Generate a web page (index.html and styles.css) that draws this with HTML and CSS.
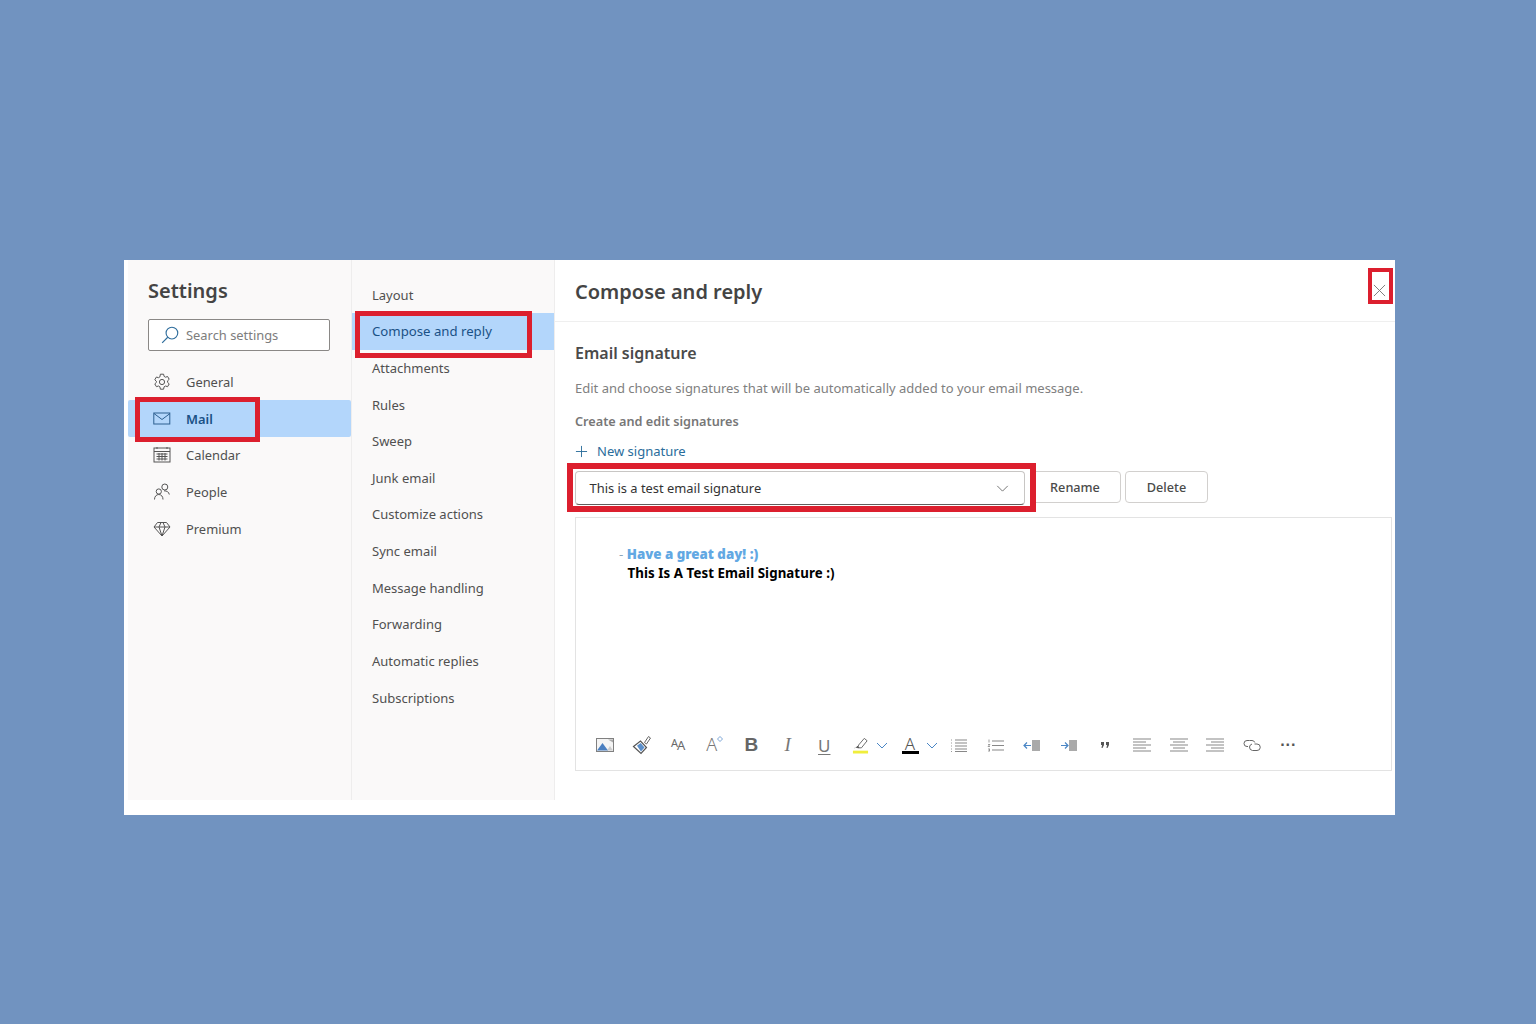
FILE: index.html
```html
<!DOCTYPE html>
<html lang="en">
<head>
<meta charset="utf-8">
<title>Settings</title>
<link rel="stylesheet" href="styles.css">
</head>
<body>
<div class="window">
  <aside class="side">
    <h1 class="side-title">Settings</h1>
    <div class="search">
      <svg class="search-icon" viewBox="0 0 16 16"><circle cx="9.7" cy="6.3" r="5.2"/><path d="M6 10 1 15"/></svg>
      <span>Search settings</span>
    </div>
    <nav class="side-nav">
      <div class="side-item">
        <svg class="ico" viewBox="0 0 18 18"><path d="M7.4 1.2h3.2l.5 2.2 1.4.8 2.1-.7 1.6 2.8-1.6 1.500v1.600l1.600 1.500-1.600 2.800-2.100-.7-1.400.8-.5 2.400H7.400l-.5-2.400-1.400-.8-2.100.7-1.600-2.800 1.600-1.500V8.300L1.800 6.800l1.600-2.800 2.100.7 1.400-.8z"/><circle cx="9" cy="9" r="2.6"/></svg>
        <span>General</span>
      </div>
      <div class="side-item active">
        <svg class="ico" viewBox="0 0 18 18"><rect x=".8" y="3" width="16" height="11"/><path d="m1 3.500 8 6 8-6"/></svg>
        <span>Mail</span>
      </div>
      <div class="side-item">
        <svg class="ico" viewBox="0 0 18 18"><rect x="1" y="2" width="16" height="14"/><path d="M1 5.500h16M4 1v2M14 1v2M3.500 8h11M3.500 10.500h11M3.500 13h11M6 7v7.500M9 7v7.500M12 7v7.500"/></svg>
        <span>Calendar</span>
      </div>
      <div class="side-item">
        <svg class="ico" viewBox="0 0 18 18"><circle cx="11.800" cy="4" r="3"/><circle cx="5.800" cy="8.500" r="2.600"/><path d="M1.500 16.500c0-3 1.800-5 4.300-5s4.200 2 4.200 5M11 7.800c3 0 4.800 1.200 5.300 3.700"/></svg>
        <span>People</span>
      </div>
      <div class="side-item">
        <svg class="ico" viewBox="0 0 18 18"><path d="M4.500 2.500h9L17 7l-8 9-8-9zM1 7h16M6 7l3 9 3-9M6 7l2-4.500M12 7l-2-4.500"/></svg>
        <span>Premium</span>
      </div>
    </nav>
  </aside>

  <nav class="sub">
    <div class="sub-item">Layout</div>
    <div class="sub-item active">Compose and reply</div>
    <div class="sub-item">Attachments</div>
    <div class="sub-item">Rules</div>
    <div class="sub-item">Sweep</div>
    <div class="sub-item">Junk email</div>
    <div class="sub-item">Customize actions</div>
    <div class="sub-item">Sync email</div>
    <div class="sub-item">Message handling</div>
    <div class="sub-item">Forwarding</div>
    <div class="sub-item">Automatic replies</div>
    <div class="sub-item">Subscriptions</div>
  </nav>

  <main class="main">
    <header class="main-head">
      <h2 class="main-title">Compose and reply</h2>
      <svg class="close" viewBox="0 0 14 14"><path d="m1 1 12 12M13 1 1 13"/></svg>
    </header>
    <section class="content">
      <h3 class="sec-title">Email signature</h3>
      <p class="desc">Edit and choose signatures that will be automatically added to your email message.</p>
      <p class="label">Create and edit signatures</p>
      <div class="new-sig">
        <svg class="plus" viewBox="0 0 14 14"><path d="M7 1v12M1 7h12"/></svg>
        <span>New signature</span>
      </div>
      <div class="controls">
        <div class="select">
          <span>This is a test email signature</span>
          <svg class="chev" viewBox="0 0 14 8"><path d="m1 1 6 6 6-6"/></svg>
        </div>
        <button class="btn btn-rename">Rename</button>
        <button class="btn btn-delete">Delete</button>
      </div>
      <div class="editor">
        <div class="sig-text">
          <div class="sig-line1"><span class="dash">-</span> <b>Have a great day! :)</b></div>
          <div class="sig-line2">This Is A Test Email Signature :)</div>
        </div>
        <div class="toolbar">
          <span class="tool"><svg viewBox="0 0 18 14" class="t-w"><rect x=".5" y=".5" width="17" height="13" fill="#f4f4f4" stroke="#808080"/><path d="M11 12.500 14 8l3 4.500z" fill="#ccc"/><path d="M1 12.500 6.500 5l5.500 7.500z" fill="#4a7fc0"/><path d="M12 1.500h5v3z" fill="#aaa"/></svg></span>
          <span class="tool"><svg viewBox="0 0 20 20" class="t-w2"><path d="m12.500 7.500 4-6 2 1.500-4 6z" fill="none" stroke="#666"/><path d="M1.500 11.500 8.500 6 14.500 12.500l-5.500 6z" fill="#fff" stroke="#555" stroke-width="1.200"/><path d="M5 10.800 8.700 8 12.500 12.500l-3.500 4z" fill="#5b8fcb"/></svg></span>
          <span class="tool tool-aa"><span class="aa-big">A</span><span class="aa-small">A</span></span>
          <span class="tool tool-ag"><span class="ag">A</span><svg viewBox="0 0 6 6" class="t-dia"><path d="m3 .5 2.500 2.500L3 5.500.5 3z"/></svg></span>
          <span class="tool glyph-b">B</span>
          <span class="tool glyph-i">I</span>
          <span class="tool glyph-u">U</span>
          <span class="tool tool-drop">
            <svg viewBox="0 0 18 18" class="t-h"><path d="m7 9 6-7 3 2.500-6 7.500H6z" fill="#fff" stroke="#666"/><path d="m2 13 4-3 2 2H3z" fill="#444"/><rect x="1" y="15" width="16" height="3" fill="#f0ee3c"/></svg>
            <svg class="mini" viewBox="0 0 12 7"><path d="m1 1 5 5 5-5"/></svg>
          </span>
          <span class="tool tool-drop tool-drop2">
            <span class="fc"><span class="fc-a">A</span></span>
            <svg class="mini" viewBox="0 0 12 7"><path d="m1 1 5 5 5-5"/></svg>
          </span>
          <span class="tool"><svg viewBox="0 0 17 13" class="t-l"><path d="M5 1h12M5 4h12M5 7h12M5 10h12M5 12.500h12" class="l"/><path d="M1 1h2M1 4h2M1 7h2M1 10h2M1 12.500h2" class="l2"/></svg></span>
          <span class="tool"><svg viewBox="0 0 17 13" class="t-l"><path d="M5 2h12M5 6.500h12M5 11h12" class="l"/><path d="M2 .5v3M1 5.500h2l-2 2h2M1 10h2l-1 1 1 1H1" class="l3"/></svg></span>
          <span class="tool"><svg viewBox="0 0 17 13" class="t-l"><rect x="9" y="1" width="8" height="11" fill="#aaa"/><path d="M8 6.500H1m3-3-3 3 3 3" class="arrow"/></svg></span>
          <span class="tool"><svg viewBox="0 0 17 13" class="t-l"><rect x="9" y="1" width="8" height="11" fill="#aaa"/><path d="M1 6.500h7m-3-3 3 3-3 3" class="arrow"/></svg></span>
          <span class="tool tool-q"><svg viewBox="0 0 10 8" class="t-q"><path d="M1 1h3v3L2.500 7H1.500L2 4H1zM6 1h3v3L7.500 7h-1L7 4H6z" fill="#555"/></svg></span>
          <span class="tool"><svg viewBox="0 0 18 14" class="t-al"><path d="M0 1h18M0 4h13M0 7h18M0 10h13M0 13h18" class="l"/></svg></span>
          <span class="tool"><svg viewBox="0 0 18 14" class="t-al"><path d="M0 1h18M3 4h12M0 7h18M3 10h12M0 13h18" class="l"/></svg></span>
          <span class="tool"><svg viewBox="0 0 18 14" class="t-al"><path d="M0 1h18M5 4h13M0 7h18M5 10h13M0 13h18" class="l"/></svg></span>
          <span class="tool"><svg viewBox="0 0 18 13" class="t-al2"><path d="M6.500 1.500H4a3 3 0 0 0 0 6h1M6.500 1.500H9a3 3 0 0 1 2.800 2" class="link"/><path d="M9 5a3.500 3.500 0 0 0-2.500 3 3.500 3.500 0 0 0 3 3.500H14a3 3 0 0 0 0-6.500h-2.500" class="link"/></svg></span>
          <span class="tool tool-more">···</span>
        </div>
      </div>
    </section>
  </main>

  <div class="mark mark-mail"></div>
  <div class="mark mark-compose"></div>
  <div class="mark mark-select"></div>
  <div class="mark mark-close"></div>
</div>
</body>
</html>
```

FILE: styles.css
```css
* { box-sizing: border-box; }
html, body { margin: 0; height: 100%; }
body {
  background: #7193c0;
  font-family: "Noto Sans", "Open Sans", sans-serif;
  padding: 260px 0 0 124px;
  color: #444;
}
.window {
  position: relative;
  display: flex;
  width: 1271px;
  height: 555px;
  background: #fff;
  padding-left: 4px;
}
h1, h2, h3, p { margin: 0; }

/* left pane */
.side {
  width: 224px;
  height: 540px;
  background: #faf9f9;
  border-right: 1px solid #eeeded;
  display: flex;
  flex-direction: column;
}
.side-title {
  font-size: 20px;
  font-weight: 600;
  line-height: 28px;
  margin: 17px 0 0 20px;
  color: #444;
}
.search {
  display: flex;
  align-items: center;
  width: 182px;
  height: 32px;
  margin: 14px 0 0 20px;
  padding-left: 12px;
  background: #fff;
  border: 1px solid #8a8886;
  border-radius: 2px;
  font-size: 12.900px;
  color: #7d7d7d;
}
.search-icon { width: 18px; height: 18px; margin-right: 7px; fill: none; stroke: #2f6d9c; stroke-width: 1; flex: none; }
.side-nav { margin-top: 12.500px; display: flex; flex-direction: column; }
.side-item {
  display: flex;
  align-items: center;
  height: 36.750px;
  padding-left: 24.500px;
  font-size: 12.900px;
  color: #505050;
}
.side-item .ico { width: 18px; height: 18px; margin-right: 15.500px; fill: none; stroke: #555; stroke-width: 1; flex: none; }
.side-item.active { background: #b3d6fb; border-radius: 2px; color: #1a5186; font-weight: 600; }
.side-item.active .ico { stroke: #2d5f90; }

/* middle pane */
.sub {
  width: 203px;
  height: 540px;
  background: #faf9f9;
  border-right: 1px solid #eeeded;
  padding-top: 16.700px;
  display: flex;
  flex-direction: column;
}
.sub-item {
  height: 36.630px;
  line-height: 36px;
  padding-left: 20px;
  font-size: 13px;
  color: #505050;
}
.sub-item.active { background: #b3d6fb; color: #1a5186; font-size: 13.200px; }

/* main pane */
.main { flex: 1; min-width: 0; }
.main-head {
  display: flex;
  align-items: center;
  justify-content: space-between;
  height: 62px;
  padding: 2px 9px 0 20px;
  border-bottom: 1px solid #efefef;
}
.main-title { font-size: 20px; font-weight: 600; line-height: 28px; color: #444; }
.close { width: 13px; height: 13px; margin-bottom: 3px; fill: none; stroke: #777; stroke-width: 1; }
.content { padding: 20px 3px 0 20px; }
.sec-title { font-size: 16px; font-weight: 600; line-height: 22px; color: #4a4a4a; }
.desc { font-size: 13px; line-height: 20px; margin-top: 14px; color: #808080; }
.label { font-size: 12.700px; font-weight: 600; line-height: 20px; margin-top: 13px; color: #777; }
.new-sig { display: flex; align-items: center; height: 20px; margin-top: 10px; font-size: 13px; color: #2a6d9b; }
.plus { width: 13px; height: 13px; margin-right: 9px; fill: none; stroke: #2a6d9b; stroke-width: 1; }
.controls { display: flex; align-items: flex-start; margin-top: 10px; }
.select {
  display: flex;
  align-items: center;
  justify-content: space-between;
  width: 450px;
  height: 34px;
  padding: 0 15px 0 13.500px;
  background: #fff;
  border: 1px solid #c8c6c4;
  border-bottom-color: #605e5c;
  border-radius: 4px;
  font-size: 12.900px;
  color: #333;
}
.chev { width: 13px; height: 7px; fill: none; stroke: #666; stroke-width: 1; }
.btn {
  height: 32px;
  background: #fff;
  border: 1px solid #d2d0ce;
  border-radius: 4px;
  font: 500 12.700px "Noto Sans", "Open Sans", sans-serif;
  color: #4a4a4a;
  padding: 0;
}
.btn-rename { width: 90px; margin-left: 6px; padding-right: 2px; }
.btn-delete { width: 83px; margin-left: 4px; }
.editor {
  display: flex;
  flex-direction: column;
  height: 254px;
  margin-top: 12px;
  border: 1px solid #e3e3e3;
  padding: 27px 0 0;
}
.sig-text { font-size: 13.300px; font-weight: 700; line-height: 19px; padding-left: 43px; }
.sig-line1 { color: #62a8e3; }
.dash { font-weight: 400; color: #8fa5b8; }
.sig-line2 { color: #000; padding-left: 8.500px; letter-spacing: .07px; }

/* toolbar */
.toolbar { display: flex; align-items: center; margin-top: auto; height: 26px; margin-bottom: 12px; padding-left: 11px; }
.tool {
  display: flex;
  align-items: center;
  justify-content: center;
  width: 36.500px;
  height: 26px;
  flex: none;
  color: #666;
}
.tool-drop { width: 50px; justify-content: flex-start; padding-left: 9px; gap: 7px; }
.tool-drop2 { width: 49px; gap: 7px; }
.tool-q { padding-right: 2px; }
.t-w { width: 18px; height: 14px; }
.t-w2 { width: 20px; height: 20px; }
.t-h { width: 17px; height: 18px; flex: none; }
.t-l { width: 17px; height: 13px; margin-left: -2px; }
.t-q { width: 10px; height: 8px; }
.t-al { width: 18px; height: 14px; }
.t-al2 { width: 18px; height: 13px; }
.mini { width: 12px; height: 7px; fill: none; stroke: #4a86c5; stroke-width: 1; flex: none; }
.tool-aa { align-items: baseline; padding-top: 5px; font-weight: 400; color: #6a6a6a; line-height: 14px; }
.aa-big { font-size: 11px; position: relative; top: -2px; }
.aa-small { font-size: 13px; position: relative; top: 1px; margin-left: -1px; }
.tool-ag { align-items: flex-start; line-height: 20px; padding-top: 2px; color: #777; }
.ag { font-size: 18px; font-weight: 300; }
.t-dia { width: 6px; height: 6px; margin-top: 2px; fill: none; stroke: #5b8fcb; stroke-width: .8; }
.fc { display: block; width: 17px; height: 18px; border-bottom: 3px solid #000; text-align: center; flex: none; line-height: 15px; }
.fc-a { font-size: 17px; font-weight: 300; color: #555; }
.l { stroke: #888; stroke-width: 1.100; fill: none; }
.l2 { stroke: #999; stroke-width: 1; fill: none; stroke-dasharray: 1 1; }
.l3 { stroke: #777; stroke-width: .7; fill: none; }
.arrow { stroke: #4a86c5; stroke-width: 1.200; fill: none; }
.link { stroke: #666; stroke-width: 1; fill: none; }
.glyph-b { font: 700 19px "Liberation Sans", sans-serif; color: #666; }
.glyph-i { font: italic 400 19px "Liberation Serif", serif; color: #777; }
.glyph-u { font: 400 17px "Noto Sans", sans-serif; color: #777; text-decoration: underline; text-underline-offset: 2px; }
.tool-more { font: 700 16px "Liberation Sans", sans-serif; color: #555; }

/* red annotation boxes */
.mark { position: absolute; border: 5px solid #dc1f2e; pointer-events: none; }
.mark-mail { left: 11px; top: 137px; width: 125px; height: 45px; }
.mark-compose { left: 231px; top: 51px; width: 177px; height: 47px; }
.mark-select { left: 443px; top: 203px; width: 469px; height: 49px; border-width: 6px; }
.mark-close { left: 1244px; top: 8px; width: 25px; height: 36px; border-width: 4px; }
```
